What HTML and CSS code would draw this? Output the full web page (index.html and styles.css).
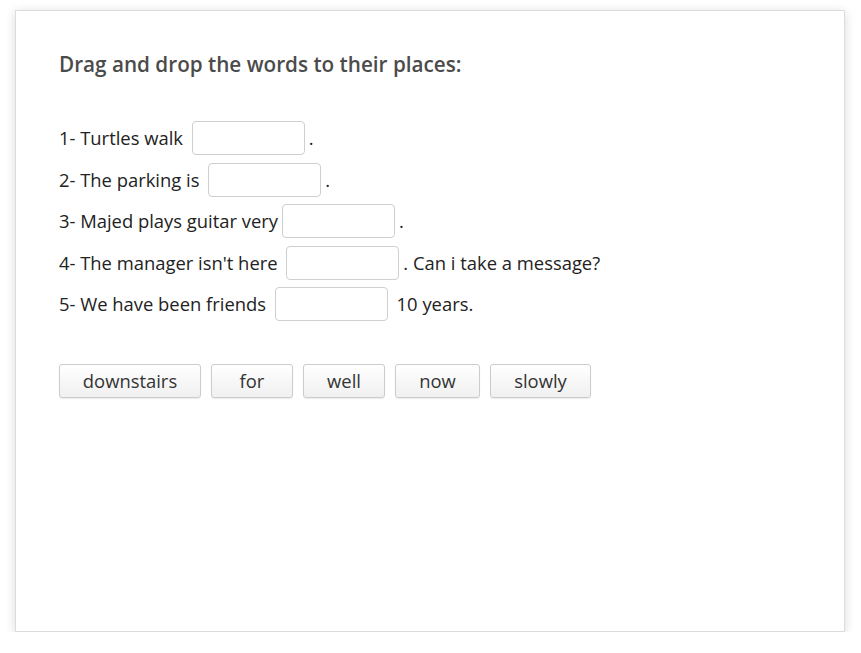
FILE: index.html
```html
<!DOCTYPE html>
<html>
<head>
<meta charset="utf-8">
<link rel="stylesheet" href="styles.css">
</head>
<body>
<div class="card">
  <h2 class="title">Drag and drop the words to their places:</h2>
  <div class="rows">
    <div class="row">1- Turtles walk <span class="drop"></span>.</div>
    <div class="row">2- The parking is <span class="drop"></span>.</div>
    <div class="row">3- Majed plays guitar very<span class="drop"></span>.</div>
    <div class="row">4- The manager isn't here <span class="drop"></span>. Can i take a message?</div>
    <div class="row">5- We have been friends <span class="drop"></span> 10 years.</div>
  </div>
  <div class="words">
    <span class="word word-downstairs">downstairs</span>
    <span class="word word-for">for</span>
    <span class="word word-well">well</span>
    <span class="word word-now">now</span>
    <span class="word word-slowly">slowly</span>
  </div>
</div>
</body>
</html>
```
FILE: styles.css
```css
html, body {
  margin: 0;
  padding: 0;
  background: #ffffff;
}
body {
  font-family: "Open Sans", "Noto Sans", sans-serif;
}
.card {
  box-sizing: border-box;
  margin: 10px 0 0 15px;
  width: 830px;
  height: 622px;
  border: 1px solid #dcdcdc;
  background: #fff;
  box-shadow: 0 2px 10px rgba(0, 0, 0, 0.15);
  padding: 41px 43px 0 43px;
}
.title {
  margin: 0;
  font-size: 20.7px;
  line-height: 24px;
  font-weight: 600;
  color: #4b4b4b;
}
.rows {
  margin-top: 45px;
  display: flex;
  flex-direction: column;
  gap: 7.5px;
}
.row {
  height: 34px;
  line-height: 34px;
  font-size: 18.4px;
  color: #222;
  white-space: nowrap;
}
.drop {
  display: inline-block;
  box-sizing: border-box;
  width: 113px;
  height: 34px;
  margin: 0 4px;
  vertical-align: top;
  border: 1px solid #cfcfcf;
  border-radius: 4px;
  background: #fff;
}
.words {
  margin-top: 43px;
  display: flex;
  gap: 10px;
}
.word {
  box-sizing: border-box;
  height: 34px;
  text-align: center;
  line-height: 32px;
  font-size: 18.4px;
  color: #333;
  border: 1px solid #cccccc;
  border-radius: 3px;
  background: linear-gradient(#ffffff, #f0f0f0);
  box-shadow: 0 1px 1px rgba(0, 0, 0, 0.08);
}
.word-downstairs { width: 142px; }
.word-for { width: 82px; }
.word-well { width: 82px; }
.word-now { width: 85px; }
.word-slowly { width: 101px; }
```
